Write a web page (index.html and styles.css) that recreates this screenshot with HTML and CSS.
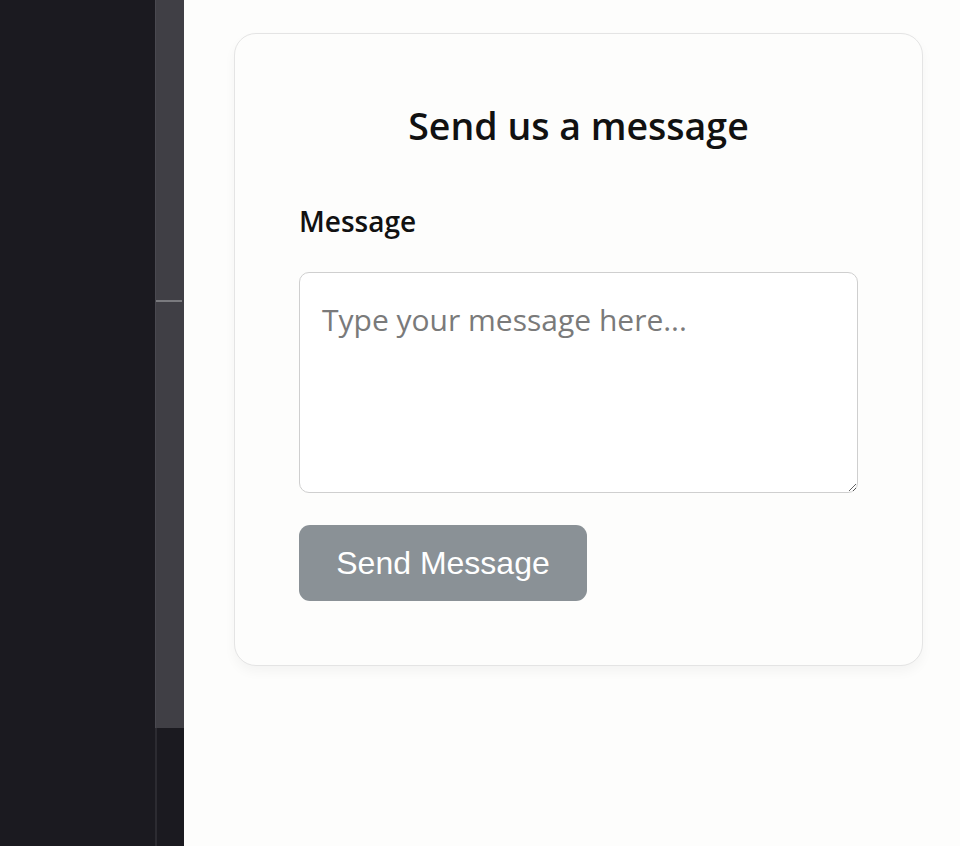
FILE: index.html
```html
<!DOCTYPE html>
<html lang="en">
<head>
<meta charset="utf-8">
<title>Contact</title>
<link rel="stylesheet" href="styles.css">
</head>
<body>
<div class="app">
  <aside class="sidebar"></aside>
  <div class="rail">
    <div class="rail-top"><div class="rail-thumb"></div></div>
    <div class="rail-bottom"></div>
  </div>
  <main class="main">
    <section class="card">
      <h1 class="title">Send us a message</h1>
      <form class="form">
        <label class="label" for="msg">Message</label>
        <textarea id="msg" class="textarea" placeholder="Type your message here..."></textarea>
        <button type="button" class="btn">Send Message</button>
      </form>
    </section>
  </main>
</div>
</body>
</html>
```

FILE: styles.css
```css
* { box-sizing: border-box; }
html, body { margin: 0; padding: 0; height: 100%; }
body { background: #fdfdfc; font-family: "Open Sans", "Noto Sans", sans-serif; }
.app { display: flex; height: 846px; }
.sidebar { width: 155px; background: #1b1a20; }
.rail { width: 29px; display: flex; flex-direction: column; }
.rail-top { height: 728px; background: #403f45; border-left: 1px solid #4a4950; padding-top: 300px; }
.rail-thumb { height: 2px; background: #7a7a7e; margin: 0 2px 0 0; }
.rail-bottom { flex: 1; background: #1b1a20; border-left: 2px solid #2c2b31; }
.main { flex: 1; padding: 33px 37px 0 50px; }
.card {
  background: #fdfdfc;
  border: 1px solid #e4e4e4;
  border-radius: 22px;
  box-shadow: 0 6px 12px rgba(0,0,0,0.04);
  padding: 67px 64px 64px;
}
.title { margin: 0 0 52px; text-align: center; font-size: 37.5px; font-weight: 600; line-height: 50px; color: #111; }
.form { display: flex; flex-direction: column; align-items: flex-start; }
.label { font-size: 28px; font-weight: 600; color: #111; line-height: 36px; margin-bottom: 33px; }
.textarea {
  display: block;
  width: 100%; height: 221px;
  border: 1px solid #cfcfcf; border-radius: 10px;
  padding: 26px 22px;
  font-family: "Open Sans", "Noto Sans", sans-serif; font-size: 30px;
  background: #fff; resize: vertical; color: #222;
}
.textarea::placeholder { color: #7a7a7a; }
.btn {
  margin-top: 32px;
  width: 288px; height: 76px;
  background: #8a9196; color: #fff; border: none; border-radius: 11px;
  font-family: "Liberation Sans", Arial, sans-serif; font-size: 32px;
}
```
